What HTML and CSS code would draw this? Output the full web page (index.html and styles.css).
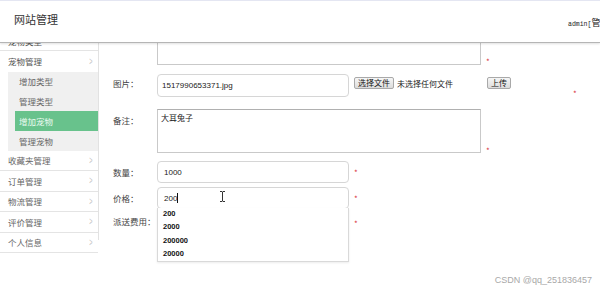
FILE: index.html
```html
<!DOCTYPE html>
<html>
<head>
<meta charset="utf-8">
<link rel="stylesheet" href="styles.css">
</head>
<body>
<header class="top">
  <div class="title">网站管理</div>
  <div class="user">admin[<span class="cjk">管理员</span>]</div>
</header>
<div class="body">
  <aside class="side">
    <div class="item cut">宠物类型<span class="chev">&gt;</span></div>
    <div class="item">宠物管理<span class="chev">&gt;</span></div>
    <div class="sub">
      <div class="sitem">增加类型</div>
      <div class="sitem">管理类型</div>
      <div class="sitem on">增加宠物</div>
      <div class="sitem">管理宠物</div>
    </div>
    <div class="item bd">收藏夹管理<span class="chev">&gt;</span></div>
    <div class="item bd">订单管理<span class="chev">&gt;</span></div>
    <div class="item bd">物流管理<span class="chev">&gt;</span></div>
    <div class="item bd">评价管理<span class="chev">&gt;</span></div>
    <div class="item bd">个人信息<span class="chev">&gt;</span></div>
  </aside>
  <main class="form">
    <div class="row r-desc">
      <div class="lab"></div>
      <div class="ta ta-top"></div>
      <span class="star s-ta">*</span>
    </div>
    <div class="row r-img">
      <div class="lab l-img">图片：</div>
      <div class="inp inp-img">1517990653371.jpg</div>
      <div class="filebox">
        <span class="btn">选择文件</span><span class="nofile">未选择任何文件</span>
        <span class="btn up">上传</span>
      </div>
      <span class="star s-img">*</span>
    </div>
    <div class="row r-note">
      <div class="lab l-note">备注：</div>
      <div class="ta ta-note">大耳兔子</div>
      <span class="star s-note">*</span>
    </div>
    <div class="row r-num">
      <div class="lab">数量：</div>
      <div class="inp">1000</div>
      <span class="star">*</span>
    </div>
    <div class="row r-price">
      <div class="lab">价格：</div>
      <div class="inp">200<span class="caret"></span>
        <svg class="ibeam" width="7" height="11" viewBox="0 0 7 11"><path d="M1 0.5h2l0.5 0.5 0.5-0.5h2M3.5 1v9M1 10.5h2l0.5-0.5 0.5 0.5h2" fill="none" stroke="#333" stroke-width="1"/></svg>
      </div>
      <span class="star">*</span>
    </div>
    <div class="row r-fee">
      <div class="lab">派送费用：</div>
      <div class="inp inp-fee"></div>
      <span class="star">*</span>
      <ul class="ac">
        <li>200</li>
        <li>2000</li>
        <li>200000</li>
        <li>20000</li>
      </ul>
    </div>
  </main>
</div>
<div class="wm">CSDN @qq_251836457</div>
</body>
</html>
```
FILE: styles.css
```css
* { box-sizing: border-box; }
html, body { margin: 0; padding: 0; }
body {
  width: 600px;
  height: 289px;
  overflow: hidden;
  background: #fff;
  font-family: "Liberation Sans", "Noto Sans CJK SC", sans-serif;
  color: #333;
  position: relative;
}
.top {
  height: 43px;
  border-top: 1px solid #e4e6f2;
  border-bottom: 1px solid #b5b5b5;
  box-shadow: 0 1px 2px rgba(0,0,0,0.12);
  display: flex;
  align-items: center;
  position: relative;
  z-index: 2;
  background: #fff;
  white-space: nowrap;
  overflow: hidden;
}
.title {
  margin-left: 14px;
  margin-top: -5px;
  width: 44px;
  flex: none;
  font-size: 11px;
  color: #333;
  font-family: "Noto Sans CJK SC", sans-serif;
}
.user {
  font-family: "Liberation Mono", "Noto Sans CJK SC", monospace;
  font-size: 6.5px;
  color: #222;
  margin-left: 510px;
  flex: none;
  margin-top: 1px;
}
.user .cjk {
  font-family: "Noto Sans CJK SC", sans-serif;
  font-size: 9px;
}
.body {
  display: flex;
  height: 246px;
}
.side {
  width: 99px;
  border-right: 1px solid #e2e2e2;
  height: 209px;
  margin-top: -12px;
  font-family: "Noto Sans CJK SC", sans-serif;
  font-size: 8.5px;
  color: #555;
}
.item {
  height: 20.5px;
  display: flex;
  align-items: center;
  justify-content: space-between;
  padding-left: 8px;
  padding-right: 4px;
}
.item.cut { border-bottom: 1px solid #e4e4e4; height: 20px; }
.item.bd { border-bottom: 1px solid #e4e4e4; color: #666; }
.chev {
  color: #c4c4c4;
  font-size: 10px;
  transform: scaleX(0.55);
  font-family: "Liberation Sans", sans-serif;
}
.sub {
  margin-left: 8px;
  background: #f0f0f0;
}
.sitem {
  height: 19.75px;
  display: flex;
  align-items: center;
  padding-left: 11px;
  color: #666;
}
.sitem.on {
  background: #68c28c;
  color: #eafaf0;
  margin-left: 7px;
  padding-left: 4px;
}
.form {
  flex: 1;
  padding-left: 14px;
  position: relative;
  font-family: "Noto Sans CJK SC", sans-serif;
  font-size: 8.5px;
  color: #444;
}
.row { display: flex; align-items: center; position: relative; }
.lab { width: 44px; flex: none; }
.star { color: #d9363e; font-size: 8px; margin-left: 5px; }
.ta {
  width: 324px;
  border: 1px solid #c9c9c9;
  border-top-color: #b0b0b0;
  background: #fff;
  font-size: 8px;
  color: #222;
  padding: 2px 3px;
}
.ta-top { height: 24px; margin-top: -2px; border-top: none; }
.s-ta { align-self: flex-end; margin-bottom: -2px; }
.r-img { margin-top: 9px; align-items: flex-start; }
.l-img { margin-top: 3px; }
.inp {
  width: 192px;
  height: 22px;
  border: 1px solid #d6d6d6;
  border-radius: 4px;
  background: #fff;
  display: flex;
  align-items: center;
  padding-left: 6px;
  font-family: "Liberation Sans", sans-serif;
  font-size: 8px;
  color: #222;
  position: relative;
}
.inp-img { height: 23px; padding-left: 4px; margin-top: 0; }
.filebox {
  display: flex;
  align-items: center;
  margin-left: 5px;
  margin-top: 3px;
  font-size: 8px;
  color: #222;
  white-space: nowrap;
}
.btn {
  display: inline-block;
  border: 1px solid #a9a9a9;
  border-radius: 2px;
  background: linear-gradient(#f6f6f6, #dcdcdc);
  padding: 0 3px;
  height: 12px;
  line-height: 10px;
  font-size: 8px;
  color: #111;
}
.nofile { margin-left: 3px; }
.up { margin-left: 34px; }
.s-img { margin-left: 62px; margin-top: 14px; }
.r-note { margin-top: 10px; align-items: flex-start; }
.l-note { margin-top: 5px; }
.ta-note { height: 44px; }
.s-note { align-self: flex-end; margin-bottom: -3px; }
.r-num { margin-top: 8px; }
.r-price { margin-top: 4px; }
.r-fee { margin-top: 3px; }
.r-fee .lab { margin-top: -4px; }
.caret {
  display: inline-block;
  width: 1px;
  height: 10px;
  background: #111;
}
.ibeam { position: absolute; left: 61px; top: 3px; }
.ac {
  position: absolute;
  left: 44px;
  top: -4px;
  width: 192px;
  margin: 0;
  padding: 0 0 0 5px;
  list-style: none;
  background: #fff;
  border: 1px solid #d9d9d9;
  border-top: none;
  box-shadow: 0 1px 2px rgba(0,0,0,0.08);
  font-family: "Liberation Sans", sans-serif;
  font-weight: bold;
  font-size: 7.5px;
  color: #111;
}
.ac li { height: 13.3px; line-height: 12px; }
.wm {
  position: absolute;
  right: 8px;
  bottom: 4px;
  font-family: "Liberation Sans", sans-serif;
  font-size: 9px;
  color: #a8a8a8;
}
```
